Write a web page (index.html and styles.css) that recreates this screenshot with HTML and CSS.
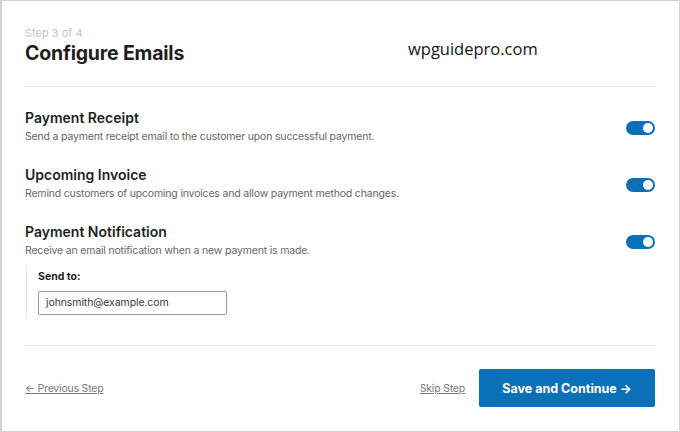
FILE: index.html
```html
<!DOCTYPE html>
<html lang="en">
<head>
<meta charset="utf-8">
<title>Configure Emails</title>
<link rel="stylesheet" href="styles.css">
</head>
<body>
<div class="frame">
  <header class="head">
    <div class="step">Step 3 of 4</div>
    <h1 class="title">Configure Emails</h1>
  </header>
  <div class="watermark">wpguidepro.com</div>
  <hr class="rule rule-top">

  <section class="option">
    <div class="option-row">
      <div class="option-text">
        <h2 class="option-title">Payment Receipt</h2>
        <p class="option-desc">Send a payment receipt email to the customer upon successful payment.</p>
      </div>
      <span class="toggle"><span class="knob"></span></span>
    </div>
  </section>

  <section class="option">
    <div class="option-row">
      <div class="option-text">
        <h2 class="option-title">Upcoming Invoice</h2>
        <p class="option-desc">Remind customers of upcoming invoices and allow payment method changes.</p>
      </div>
      <span class="toggle"><span class="knob"></span></span>
    </div>
  </section>

  <section class="option">
    <div class="option-row">
      <div class="option-text">
        <h2 class="option-title">Payment Notification</h2>
        <p class="option-desc">Receive an email notification when a new payment is made.</p>
      </div>
      <span class="toggle"><span class="knob"></span></span>
    </div>
    <div class="sendto">
      <label class="sendto-label">Send to:</label>
      <div class="input">johnsmith@example.com</div>
    </div>
  </section>

  <hr class="rule rule-bottom">

  <footer class="foot">
    <a class="link" href="#">← Previous Step</a>
    <div class="foot-right">
      <a class="link" href="#">Skip Step</a>
      <button class="btn">Save and Continue →</button>
    </div>
  </footer>
</div>
</body>
</html>
```

FILE: styles.css
```css
* { box-sizing: border-box; }
html, body { margin: 0; padding: 0; background: #fff; }
body { font-family: Inter, "Noto Sans", sans-serif; color: #1e1e1e; }

.frame {
  position: relative;
  width: 680px;
  height: 432px;
  border: 1px solid #d4d4d4;
  border-left-width: 2px;
  padding: 25px 24px 0 23px;
  overflow: hidden;
}

.head { display: flex; flex-direction: column; }
.step { font-size: 11px; line-height: 14px; color: #c4c4c4; }
.title { margin: 0; font-size: 19.5px; line-height: 26px; font-weight: 700; color: #1e1e1e; letter-spacing: -0.2px; }

.watermark {
  position: absolute;
  left: 406px;
  top: 36px;
  font-family: "Open Sans", sans-serif;
  font-size: 16.5px;
  line-height: 24px;
  color: #151515;
}

.rule { border: 0; height: 1px; background: #e6e6e6; margin: 0; }
.rule-top { margin-top: 20px; margin-bottom: 20px; }

.option { margin-bottom: 19px; }
.option-row { display: flex; align-items: center; justify-content: space-between; }
.option-title { margin: 0; font-size: 14px; line-height: 21px; font-weight: 600; color: #1e1e1e; }
.option-desc { margin: 1px 0 0; font-size: 10.5px; line-height: 16px; color: #666; letter-spacing: -0.18px; }

.toggle {
  position: relative;
  width: 29px;
  height: 14px;
  margin-top: 4px;
  border-radius: 7px;
  background: #0a71b8;
  flex: none;
}
.knob {
  position: absolute;
  right: 2px;
  top: 2px;
  width: 10px;
  height: 10px;
  border-radius: 50%;
  background: #fff;
}

.option:last-of-type { margin-bottom: 0; }
.sendto {
  margin: 6px 0 0 1px;
  border-left: 1px solid #e6e6e6;
  padding: 5px 0 4px 11px;
}
.sendto-label { display: block; font-size: 10.5px; line-height: 14px; font-weight: 700; color: #1e1e1e; margin-bottom: 7px; }
.input {
  width: 189px;
  height: 24px;
  border: 1px solid #9a9a9a;
  border-radius: 2px;
  padding: 0 7px;
  font-size: 10.5px;
  line-height: 22px;
  color: #3a3a3a;
  letter-spacing: -0.1px;
}

.rule-bottom { margin-top: 26px; }

.foot {
  display: flex;
  align-items: center;
  justify-content: space-between;
  margin-top: 23px;
}
.foot-right { display: flex; align-items: center; gap: 14px; }
.link { font-size: 10.5px; color: #777; text-decoration: underline; letter-spacing: -0.2px; }
.btn {
  width: 176px;
  height: 38px;
  border: 0;
  border-radius: 2px;
  background: #0a71b8;
  color: #fff;
  font-family: Inter, "Noto Sans", sans-serif;
  font-size: 12.5px;
  font-weight: 700;
  padding: 0;
}
```
